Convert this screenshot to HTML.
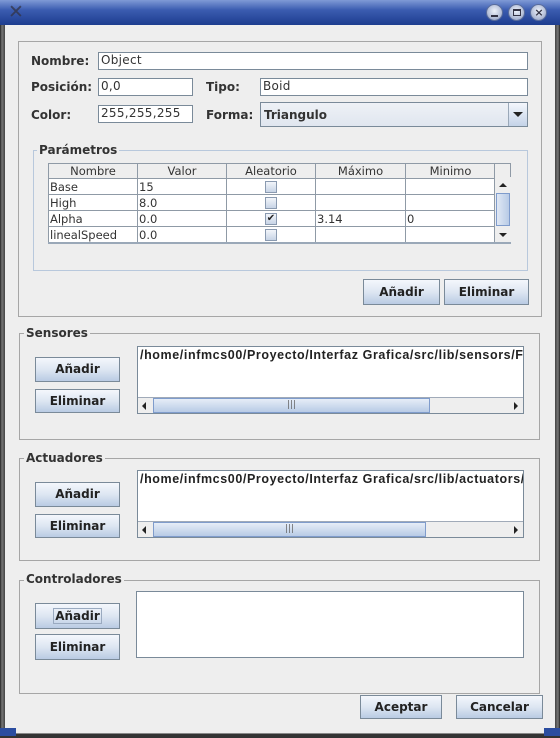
<!DOCTYPE html>
<html><head><meta charset="utf-8"><style>
*{box-sizing:border-box;margin:0;padding:0}
body{width:560px;height:738px;position:relative;overflow:hidden;background:#eeeeee;font-family:"DejaVu Sans","Liberation Sans",sans-serif;font-size:12px;color:#333}
.a{position:absolute}
.title{left:0;top:0;width:560px;height:25px;background:linear-gradient(#7f9ad6,#3b5cb0 40%,#1d3d8f);}
.frameL{left:0;top:25px;width:5px;height:713px;background:linear-gradient(90deg,#222,#777 40%,#444)}
.frameR{left:555px;top:25px;width:5px;height:713px;background:linear-gradient(90deg,#444,#777 60%,#222)}
.frameB{left:0;top:733px;width:560px;height:5px;background:#333;border-top:1px solid #888}
.frameB:before{content:"";position:absolute;left:0;top:-6px;width:16px;height:8px;background:#2b4da0}
.frameB:after{content:"";position:absolute;right:0;top:-6px;width:16px;height:8px;background:#2b4da0}
.circ{width:17px;height:17px;border-radius:50%;top:4px;background:radial-gradient(circle at 50% 40%,#eef2fa,#aab6d2 70%,#7c8ab0);border:1px solid #5a6d9c}
.box{border:1px solid #a6a6a6}
.gbox{border:1px solid #b8c8dc}
.lbl{font-weight:bold;font-size:12px;color:#333;line-height:14px}
.tf{background:#fff;border:1px solid #7a8a99;font-size:12px;line-height:15px;padding-left:2px;color:#333;letter-spacing:.3px}
.btn{border:1px solid #7a8a99;background:linear-gradient(#f4f7fc,#dde6f2 50%,#b9cbe3);font-weight:bold;font-size:12px;text-align:center;color:#222}
.leg{background:#eeeeee;padding:0 2px;font-weight:bold;font-size:12px;line-height:14px;color:#333}
table{border-collapse:collapse;font-size:11.5px;color:#333}
td{border:1px solid #8f9aa6;height:16px;padding:0 1px;line-height:14px;white-space:nowrap}
th{font-weight:normal;border:1px solid #8f9aa6;background:#eeeeee;height:15px;line-height:13px}
.cb{display:inline-block;width:12px;height:12px;border:1px solid #8a9ab0;background:linear-gradient(#f2f5fa,#c8d4e6);vertical-align:middle;font-size:10px;line-height:10px;text-align:center;color:#222}
.list{background:#fff;border:1px solid #7a8a99;overflow:hidden}
.path{font-family:"Liberation Sans",sans-serif;font-weight:bold;font-size:12.5px;letter-spacing:.6px;white-space:nowrap;padding-left:2px;line-height:16px;color:#222}
.hs{left:0;bottom:0;width:100%;height:16px;border-top:1px solid #a0aab8;background:#eeeeee}
</style></head><body>
<div class="a title"></div>
<div class="a" style="left:8px;top:3px;font-size:19px;color:#334;font-weight:bold;line-height:19px;opacity:.75">✕</div>
<div class="a circ" style="left:486px"></div><div class="a" style="left:491px;top:15px;width:7px;height:2px;background:#334"></div>
<div class="a circ" style="left:508px"></div><div class="a" style="left:513px;top:9px;width:8px;height:7px;border:1.5px solid #334;border-top-width:2px"></div>
<div class="a circ" style="left:530px"></div><div class="a" style="left:534px;top:4px;font-size:11px;font-weight:bold;color:#334;line-height:18px;width:10px;text-align:center">×</div>
<div class="a frameL"></div><div class="a frameR"></div><div class="a frameB"></div>

<div class="a box" style="left:18px;top:41px;width:524px;height:276px"></div>
<div class="a lbl" style="left:31px;top:54px">Nombre:</div>
<div class="a tf" style="left:98px;top:52px;width:430px;height:18px">Object</div>
<div class="a lbl" style="left:31px;top:80px">Posición:</div>
<div class="a tf" style="left:98px;top:78px;width:95px;height:18px">0,0</div>
<div class="a lbl" style="left:206px;top:80px">Tipo:</div>
<div class="a tf" style="left:260px;top:78px;width:268px;height:18px">Boid</div>
<div class="a lbl" style="left:31px;top:108px">Color:</div>
<div class="a tf" style="left:98px;top:105px;width:95px;height:18px">255,255,255</div>
<div class="a lbl" style="left:206px;top:108px">Forma:</div>
<div class="a" style="left:260px;top:102px;width:268px;height:25px;border:1px solid #7a8a99;background:linear-gradient(#eef1f6,#e0e6ef)"></div>
<div class="a lbl" style="left:264px;top:108px">Triangulo</div>
<div class="a" style="left:508px;top:103px;width:19px;height:23px;border-left:1px solid #9aa8b8;background:linear-gradient(#f4f7fc,#c4d3e8)"></div>
<div class="a" style="left:513px;top:112px;width:0;height:0;border-left:5px solid transparent;border-right:5px solid transparent;border-top:5px solid #222"></div>

<div class="a gbox" style="left:33px;top:150px;width:495px;height:121px"></div>
<div class="a leg" style="left:37px;top:143px">Parámetros</div>
<div class="a" style="left:48px;top:163px;width:463px;height:81px;background:#fff;overflow:hidden;border-bottom:2px solid #9aa8b8">
<table style="position:absolute;left:0;top:0;width:447px;table-layout:fixed">
<colgroup><col style="width:89px"><col style="width:89px"><col style="width:89px"><col style="width:90px"><col style="width:90px"></colgroup>
<tr><th>Nombre</th><th>Valor</th><th>Aleatorio</th><th>Máximo</th><th>Minimo</th></tr>
<tr><td>Base</td><td>15</td><td style="text-align:center"><span class="cb"></span></td><td></td><td></td></tr>
<tr><td>High</td><td>8.0</td><td style="text-align:center"><span class="cb"></span></td><td></td><td></td></tr>
<tr><td>Alpha</td><td>0.0</td><td style="text-align:center"><span class="cb">✔</span></td><td>3.14</td><td>0</td></tr>
<tr><td>linealSpeed</td><td>0.0</td><td style="text-align:center"><span class="cb"></span></td><td style="border-bottom:2px solid #000"></td><td></td></tr>
</table>
<div class="a" style="left:446px;top:0;width:17px;height:15px;background:#eeeeee;border:1px solid #8f9aa6"></div>
<div class="a" style="left:446px;top:14px;width:17px;height:67px;background:#eeeeee;border-left:1px solid #8f9aa6"></div>
<div class="a" style="left:451px;top:20px;border-left:4px solid transparent;border-right:4px solid transparent;border-bottom:4px solid #222"></div>
<div class="a" style="left:448px;top:30px;width:14px;height:33px;border:1px solid #7f9ccc;background:linear-gradient(90deg,#e0e8f4,#b8cbe6)"></div>
<div class="a" style="left:451px;top:70px;border-left:4px solid transparent;border-right:4px solid transparent;border-top:4px solid #222"></div>
</div>
<div class="a btn" style="left:363px;top:279px;width:77px;height:26px;line-height:24px">Añadir</div>
<div class="a btn" style="left:444px;top:279px;width:85px;height:26px;line-height:24px">Eliminar</div>

<div class="a box" style="left:19px;top:333px;width:521px;height:107px"></div>
<div class="a leg" style="left:24px;top:326px">Sensores</div>
<div class="a btn" style="left:35px;top:357px;width:85px;height:25px;line-height:23px">Añadir</div>
<div class="a btn" style="left:35px;top:389px;width:85px;height:24px;line-height:22px">Eliminar</div>
<div class="a list" style="left:137px;top:346px;width:387px;height:68px">
<div class="path">/home/infmcs00/Proyecto/Interfaz Grafica/src/lib/sensors/F</div>
<div class="a hs"><div class="a" style="left:4px;top:4px;border-top:4px solid transparent;border-bottom:4px solid transparent;border-right:4px solid #222"></div>
<div class="a" style="left:15px;top:0;width:277px;height:15px;border:1px solid #7f9ccc;background:linear-gradient(#e6edf7,#b8cbe6);text-align:center;font-size:9px;line-height:13px;color:#666">|||</div>
<div class="a" style="left:376px;top:4px;border-top:4px solid transparent;border-bottom:4px solid transparent;border-left:4px solid #222"></div></div>
</div>

<div class="a box" style="left:19px;top:458px;width:521px;height:103px"></div>
<div class="a leg" style="left:24px;top:451px">Actuadores</div>
<div class="a btn" style="left:35px;top:482px;width:85px;height:25px;line-height:23px">Añadir</div>
<div class="a btn" style="left:35px;top:514px;width:85px;height:24px;line-height:22px">Eliminar</div>
<div class="a list" style="left:137px;top:470px;width:387px;height:68px">
<div class="path">/home/infmcs00/Proyecto/Interfaz Grafica/src/lib/actuators/</div>
<div class="a hs"><div class="a" style="left:4px;top:4px;border-top:4px solid transparent;border-bottom:4px solid transparent;border-right:4px solid #222"></div>
<div class="a" style="left:15px;top:0;width:273px;height:15px;border:1px solid #7f9ccc;background:linear-gradient(#e6edf7,#b8cbe6);text-align:center;font-size:9px;line-height:13px;color:#666">|||</div>
<div class="a" style="left:376px;top:4px;border-top:4px solid transparent;border-bottom:4px solid transparent;border-left:4px solid #222"></div></div>
</div>

<div class="a box" style="left:19px;top:580px;width:521px;height:114px"></div>
<div class="a leg" style="left:24px;top:572px">Controladores</div>
<div class="a btn" style="left:35px;top:603px;width:85px;height:26px;line-height:24px"><span style="border:1px solid #9aaac0;padding:0 1px">Añadir</span></div>
<div class="a btn" style="left:35px;top:634px;width:85px;height:26px;line-height:24px">Eliminar</div>
<div class="a list" style="left:136px;top:591px;width:388px;height:67px"></div>

<div class="a btn" style="left:360px;top:695px;width:82px;height:24px;line-height:22px">Aceptar</div>
<div class="a btn" style="left:456px;top:695px;width:87px;height:24px;line-height:22px">Cancelar</div>
</body></html>
